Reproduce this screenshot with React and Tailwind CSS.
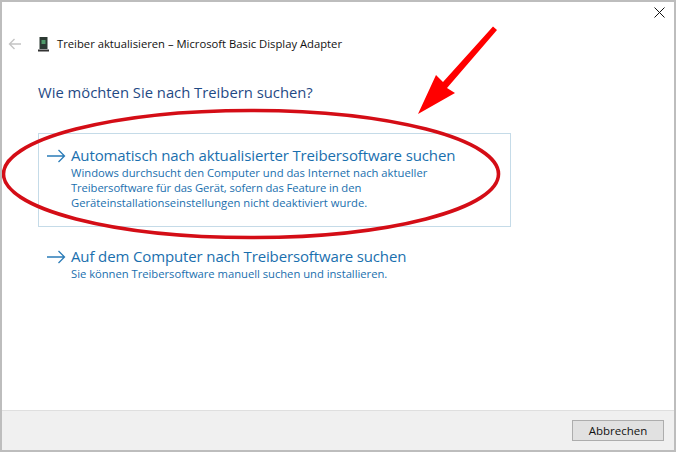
import React from "react";

const Arrow = () => (
  <svg width="20" height="14" viewBox="0 0 20 14" fill="none" stroke="#2b7cb8" strokeWidth="1.3" className="shrink-0">
    <path d="M1 7H18.5M12.5 1L18.5 7L12.5 13" />
  </svg>
);

const Option = ({ title, children }) => (
  <div className="flex items-start gap-[5px] pl-[7px]">
    <div className="pt-[4px]"><Arrow /></div>
    <div>
      <div className="text-[15px] tracking-[-0.13px] leading-[20px] text-[#1a6fae]">{title}</div>
      <div className="text-[11.25px] leading-[15px] text-[#1a6fae]">{children}</div>
    </div>
  </div>
);

export default function App() {
  return (
    <div className="relative w-[676px] h-[452px] bg-white border-2 border-[#bdbdbd] flex flex-col overflow-hidden font-['Open_Sans',sans-serif]">
      <div className="flex justify-end pt-[5px] pr-[9px] h-[24px]">
        <svg width="11" height="11" viewBox="0 0 11 11" stroke="#111" strokeWidth="1" fill="none">
          <path d="M0.5 0.5L10.5 10.5M10.5 0.5L0.5 10.5" />
        </svg>
      </div>
      <div className="flex items-center h-[36px] pl-[6px]">
        <svg width="14" height="12" viewBox="0 0 14 12" fill="none" stroke="#c4c4c4" strokeWidth="1.4">
          <path d="M13 6H1.5M6.5 1L1.5 6L6.5 11" />
        </svg>
        <svg width="11" height="15" viewBox="0 0 11 15" className="ml-[16px]">
          <rect x="1.5" y="0" width="8" height="12" fill="#2c3a33" />
          <rect x="3.5" y="3" width="4" height="4" fill="#4f9a6a" />
          <rect x="0" y="12.5" width="11" height="2" fill="#333" />
        </svg>
        <span className="ml-[8px] text-[11.25px] text-[#111]">Treiber aktualisieren – Microsoft Basic Display Adapter</span>
      </div>
      <div className="pl-[36px] pt-[20px] text-[14.8px] leading-[20px] text-[#1f4a85]">Wie möchten Sie nach Treibern suchen?</div>
      <div className="ml-[36px] mt-[31px] w-[473px] h-[94px] border border-[#c5dbe8] pt-[11px]">
        <Option title="Automatisch nach aktualisierter Treibersoftware suchen">
          <div>Windows durchsucht den Computer und das Internet nach aktueller</div>
          <div className="tracking-[-0.09px]">Treibersoftware für das Gerät, sofern das Feature in den</div>
          <div>Geräteinstallationseinstellungen nicht deaktiviert wurde.</div>
        </Option>
      </div>
      <div className="ml-[37px] mt-[19px]">
        <Option title="Auf dem Computer nach Treibersoftware suchen">
          <div className="tracking-[-0.03px]">Sie können Treibersoftware manuell suchen und installieren.</div>
        </Option>
      </div>
      <div className="mt-auto h-[40px] bg-[#f0f0f0] border-t border-[#dfdfdf] flex items-center justify-end pr-[10px]">
        <div className="w-[92px] h-[21px] bg-[#e1e1e1] border border-[#adadad] flex items-center justify-center text-[11.5px] text-[#111]">Abbrechen</div>
      </div>
      <svg className="absolute left-[-2px] top-[-2px] pointer-events-none" width="676" height="452" viewBox="0 0 676 452" fill="none">
        <ellipse cx="251" cy="174" rx="247.5" ry="63.5" stroke="#d40d16" strokeWidth="3.6" />
        <path d="M493 26.5L497 30L447 88L455 93L418 114L436 75L443 82Z" fill="#f00" />
      </svg>
    </div>
  );
}
